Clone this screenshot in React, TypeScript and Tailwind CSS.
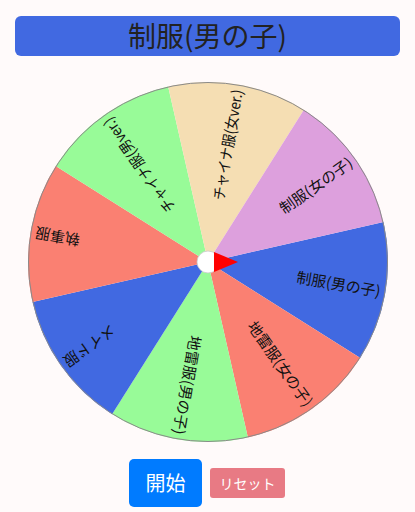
import React from "react";

type Segment = { label: string; color: string; squeeze?: boolean };

const segments: Segment[] = [
  { label: "制服(男の子)", color: "#4169e1" },
  { label: "地雷服(女の子)", color: "#fa8072" },
  { label: "地雷服(男の子)", color: "#98fb98" },
  { label: "メイド服", color: "#4169e1" },
  { label: "執事服", color: "#fa8072" },
  { label: "チャイナ服(男ver.)", color: "#98fb98", squeeze: true },
  { label: "チャイナ服(女ver.)", color: "#f5deb3", squeeze: true },
  { label: "制服(女の子)", color: "#dda0dd" },
];

const R = 180;
const START = -12.8;
const STEP = 360 / segments.length;

function point(deg: number, r: number) {
  const a = (deg * Math.PI) / 180;
  return [R + r * Math.cos(a), R + r * Math.sin(a)];
}

function Wheel() {
  return (
    <svg width={360} height={360} viewBox="0 0 360 360" className="block">
      {segments.map((s, i) => {
        const a0 = START + i * STEP;
        const a1 = a0 + STEP;
        const [x0, y0] = point(a0, R);
        const [x1, y1] = point(a1, R);
        return (
          <path
            key={"p" + i}
            d={`M${R},${R} L${x0},${y0} A${R},${R} 0 0 1 ${x1},${y1} Z`}
            fill={s.color}
          />
        );
      })}
      <circle cx={R} cy={R} r={R - 0.5} fill="none" stroke="#8a8a8a" strokeWidth={1} />
      {segments.map((s, i) => {
        const mid = START + i * STEP + STEP / 2;
        return (
          <text
            key={"t" + i}
            transform={`translate(${R},${R}) rotate(${mid})`}
            x={175}
            y={-1}
            textAnchor="end"
            dominantBaseline="central"
            fontSize={15}
            fill="#111"
            style={{ fontFamily: '"Noto Sans CJK JP", "Noto Sans", sans-serif' }}
            {...(s.squeeze ? { textLength: 112, lengthAdjust: "spacingAndGlyphs" } : {})}
          >
            {s.label}
          </text>
        );
      })}
      {/* pointer */}
      <circle cx={R} cy={R} r={11} fill="#fff" stroke="#c8c8c8" strokeWidth={0.8} />
      <polygon points="186,170 210,180 186,190" fill="#ff0000" />
    </svg>
  );
}

export default function App() {
  return (
    <div
      className="w-[415px] h-[512px] bg-[#fffafa] overflow-hidden"
      style={{ fontFamily: '"Noto Sans CJK JP", "Noto Sans", sans-serif' }}
    >
      {/* title */}
      <div className="mx-[15px] mt-[16px] h-[40px] rounded-[6px] bg-[#4169e1] flex items-center justify-center">
        <h1 className="text-[28px] leading-none text-[#222] -mt-[2px]">制服(男の子)</h1>
      </div>

      {/* wheel */}
      <div className="mt-[26px] flex justify-center">
        <Wheel />
      </div>

      {/* buttons */}
      <div className="mt-[17px] flex items-center justify-center gap-[8px] pr-[1px]">
        <button className="w-[73px] h-[48px] rounded-[5px] bg-[#007bff] text-white text-[20px] leading-none">
          開始
        </button>
        <button className="w-[75px] h-[30px] rounded-[3px] bg-[#e87a84] text-white text-[14px] leading-none">
          リセット
        </button>
      </div>
    </div>
  );
}
